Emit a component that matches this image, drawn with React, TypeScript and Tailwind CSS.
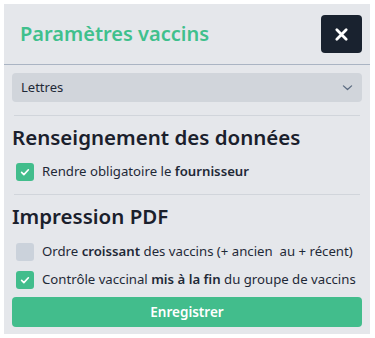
import { useState } from 'react';

const Check = ({ checked }: { checked: boolean }) => (
    <span
        className={`flex h-[18px] w-[18px] shrink-0 items-center justify-center rounded-[3px] ${
            checked ? 'bg-[#42bd8c]' : 'bg-[#cbd2db]'
        }`}
    >
        {checked && (
            <svg viewBox="0 0 16 16" className="h-[12px] w-[12px]" fill="none" stroke="white" strokeWidth="2.2" strokeLinecap="round" strokeLinejoin="round">
                <path d="M3.5 8.5l3 3 6-6.5" />
            </svg>
        )}
    </span>
);

const App = () => {
    const [sort, setSort] = useState('Lettres');
    const [fournisseur, setFournisseur] = useState(true);
    const [croissant, setCroissant] = useState(false);
    const [controleFin, setControleFin] = useState(true);

    return (
        <div className="bg-white p-1 font-['Noto_Sans',sans-serif]">
            <div className="flex h-[330px] w-[366px] flex-col bg-[#e5e7eb]">
                {/* Header */}
                <div className="flex h-[61px] items-center justify-between border-b border-[#aab4c3] pl-4 pr-2">
                    <h1 className="text-[20px] font-semibold text-[#3fc08d]">Paramètres vaccins</h1>
                    <button className="flex h-[38px] w-[41px] items-center justify-center rounded-[4px] bg-[#19222f]">
                        <svg viewBox="0 0 16 16" className="h-[15px] w-[15px]" fill="none" stroke="white" strokeWidth="3" strokeLinecap="round">
                            <path d="M3 3l10 10M13 3L3 13" />
                        </svg>
                    </button>
                </div>

                {/* Body */}
                <div className="flex flex-col px-2 pt-2">
                    <div className="relative">
                        <select
                            value={sort}
                            onChange={(e) => setSort(e.target.value)}
                            className="h-[29px] w-full appearance-none rounded-[4px] bg-[#d1d5db] pl-[9px] text-[13px] text-[#1f2937] outline-none"
                        >
                            <option>Lettres</option>
                            <option>Chronologique</option>
                        </select>
                        <svg viewBox="0 0 16 16" className="pointer-events-none absolute right-[8px] top-[8px] h-[13px] w-[13px]" fill="none" stroke="#5b6b80" strokeWidth="1.6" strokeLinecap="round" strokeLinejoin="round">
                            <path d="M3 6l5 4.5L13 6" />
                        </svg>
                    </div>

                    <div className="mx-0.5 mt-[13px] border-t border-[#d1d5db]" />

                    <h2 className="mt-[7px] text-[20.5px] font-semibold leading-[28px] text-[#1a202c]">Renseignement des données</h2>
                    <label className="mt-[12px] flex h-[18px] items-center gap-[8px] pl-1 text-[13.2px] text-[#1f2937]">
                        <input type="checkbox" className="hidden" checked={fournisseur} onChange={() => setFournisseur(!fournisseur)} />
                        <Check checked={fournisseur} />
                        <span>Rendre obligatoire le <b className="font-semibold">fournisseur</b></span>
                    </label>

                    <div className="mx-0.5 mt-[13px] border-t border-[#d1d5db]" />

                    <h2 className="mt-[7px] text-[20.5px] font-semibold leading-[28px] text-[#1a202c]">Impression PDF</h2>
                    <label className="mt-[13px] flex h-[18px] items-center gap-[8px] pl-1 text-[13.2px] text-[#1f2937]">
                        <input type="checkbox" className="hidden" checked={croissant} onChange={() => setCroissant(!croissant)} />
                        <Check checked={croissant} />
                        <span className="whitespace-pre">Ordre <b className="font-semibold">croissant</b> des vaccins (+ ancien  au + récent)</span>
                    </label>
                    <label className="mt-[10px] flex h-[18px] items-center gap-[8px] pl-1 text-[13.2px] text-[#1f2937]">
                        <input type="checkbox" className="hidden" checked={controleFin} onChange={() => setControleFin(!controleFin)} />
                        <Check checked={controleFin} />
                        <span>Contrôle vaccinal <b className="font-semibold">mis à la fin</b> du groupe de vaccins</span>
                    </label>

                    <button className="mt-[8px] h-[30px] w-full rounded-[4px] bg-[#42bd8c] text-[13.5px] font-semibold text-white">
                        Enregistrer
                    </button>
                </div>
            </div>
        </div>
    );
};

export default App;
